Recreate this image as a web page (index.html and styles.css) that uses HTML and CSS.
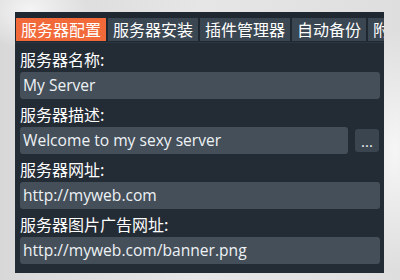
FILE: index.html
```html
<!DOCTYPE html>
<html lang="zh">
<head>
<meta charset="utf-8">
<title>服务器配置</title>
<link rel="stylesheet" href="styles.css">
</head>
<body>
<div class="panel">
  <div class="tabbar">
    <div class="tab active">服务器配置</div>
    <div class="tab">服务器安装</div>
    <div class="tab">插件管理器</div>
    <div class="tab">自动备份</div>
    <div class="tab">附加设置</div>
  </div>
  <div class="form">
    <div class="label first">服务器名称:</div>
    <div class="row"><div class="input">My Server</div></div>
    <div class="label">服务器描述:</div>
    <div class="row"><div class="input">Welcome to my sexy server</div><div class="btn">...</div></div>
    <div class="label">服务器网址:</div>
    <div class="row"><div class="input">http://myweb.com</div></div>
    <div class="label">服务器图片广告网址:</div>
    <div class="row"><div class="input">http://myweb.com/banner.png</div></div>
  </div>
</div>
</body>
</html>
```

FILE: styles.css
```css
html, body {
  margin: 0;
  height: 100%;
}
body {
  width: 400px;
  height: 280px;
  overflow: hidden;
  box-sizing: border-box;
  padding: 12px 0 0 15px;
  background:
    radial-gradient(ellipse 60px 40px at 30px 10px, #f4f4f4 0%, rgba(244,244,244,0) 100%),
    radial-gradient(ellipse 40px 120px at 395px 150px, #f6f6f6 0%, rgba(246,246,246,0) 100%),
    linear-gradient(90deg, #d8d8d8 0%, #e6e6e6 50%, #dedede 100%);
  font-family: "Noto Sans CJK SC", "Open Sans", sans-serif;
}
.panel {
  width: 369px;
  height: 261px;
  background: #232b35;
  overflow: hidden;
}
.tabbar {
  display: flex;
  gap: 2px;
  padding: 6px 0 0 1px;
  height: 31px;
  box-sizing: border-box;
  background: #1f2730;
  border-bottom: 1px solid #2c3641;
  overflow: hidden;
  white-space: nowrap;
}
.tab {
  flex: none;
  height: 23px;
  line-height: 23px;
  padding: 0 5px;
  font-size: 16px;
  color: #ffffff;
  background: #3a4651;
}
.tab.active {
  background: #f26a3a;
}
.form {
  padding: 0 4px 0 5px;
}
.label {
  height: 28px;
  box-sizing: border-box;
  padding-top: 5px;
  line-height: 20px;
  font-size: 16px;
  color: #ffffff;
}
.label.first {
  height: 29px;
  padding-top: 6px;
}
.row {
  display: flex;
  gap: 7px;
  align-items: center;
}
.input {
  flex: 1;
  height: 27px;
  line-height: 27px;
  box-sizing: border-box;
  padding: 0 3px;
  background: #444f5a;
  border-radius: 3px;
  color: #eef2f5;
  font-family: "Open Sans", "Noto Sans CJK SC", sans-serif;
  font-size: 15.6px;
}
.btn {
  flex: none;
  width: 24px;
  height: 23px;
  line-height: 25px;
  margin-right: 1px;
  text-align: center;
  background: #3a4550;
  border-radius: 3px;
  color: #eef2f5;
  font-family: "Open Sans", sans-serif;
  font-size: 15px;
}
```
